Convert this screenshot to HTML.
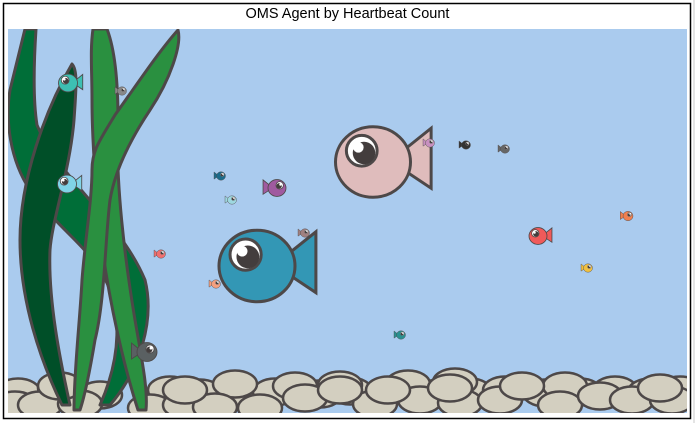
<!DOCTYPE html>
<html><head><meta charset="utf-8"><style>
html,body{margin:0;padding:0;background:#fff;}
body{width:695px;height:423px;overflow:hidden;position:relative;}
.t{position:absolute;left:0;top:6px;width:695px;text-align:center;font:14.5px "Liberation Sans",sans-serif;color:#000;}
</style></head><body>
<svg width="695" height="423" style="position:absolute;left:0;top:0">
<defs>
<clipPath id="c"><rect x="8" y="29" width="679" height="384"/></clipPath>
<g id="f">
<polygon points="8,-3 15.5,-9 15.5,7 8,2" stroke-linejoin="miter"/>
<ellipse cx="0" cy="0" rx="10" ry="9.4"/>
<circle cx="-3" cy="-3" r="4.1" fill="#fff"/>
<circle cx="-2.4" cy="-2.4" r="3.0" fill="#433d3d" stroke="none"/>
<circle cx="-3.9" cy="-3.9" r="1.4" fill="#fff" stroke="none"/>
</g>
<ellipse id="p" cx="0" cy="0" rx="22" ry="13.5"/>
</defs>
<rect x="693" y="0" width="2" height="423" fill="#e4e4e4"/>
<rect x="3.5" y="3.5" width="687" height="415" fill="#fff" stroke="#000" stroke-width="1.5"/>
<rect x="8" y="29" width="679" height="384" fill="#aacbee"/>
<g clip-path="url(#c)" stroke="#4d4848" stroke-width="3" stroke-linejoin="round">
<g fill="#d3cfc0" stroke-width="2.5">
<use href="#p" x="18" y="392"/><use href="#p" x="60" y="388"/><use href="#p" x="100" y="395"/><use href="#p" x="170" y="390"/><use href="#p" x="200" y="393"/><use href="#p" x="240" y="395"/><use href="#p" x="275" y="392"/><use href="#p" x="320" y="394"/><use href="#p" x="350" y="391"/><use href="#p" x="395" y="390"/><use href="#p" x="430" y="394"/><use href="#p" x="470" y="392"/><use href="#p" x="505" y="390"/><use href="#p" x="545" y="393"/><use href="#p" x="580" y="392"/><use href="#p" x="615" y="390"/><use href="#p" x="650" y="392"/><use href="#p" x="680" y="390"/>
<use href="#p" x="235" y="384"/><use href="#p" x="340" y="385"/><use href="#p" x="455" y="382"/><use href="#p" x="565" y="386"/><use href="#p" x="295" y="386"/><use href="#p" x="408" y="384"/>
<use href="#p" x="15" y="405"/><use href="#p" x="40" y="405"/><use href="#p" x="80" y="404"/><use href="#p" x="150" y="408"/><use href="#p" x="185" y="405"/><use href="#p" x="215" y="407"/><use href="#p" x="260" y="408"/><use href="#p" x="305" y="398"/><use href="#p" x="375" y="404"/><use href="#p" x="420" y="400"/><use href="#p" x="460" y="403"/><use href="#p" x="500" y="400"/><use href="#p" x="560" y="405"/><use href="#p" x="600" y="396"/><use href="#p" x="632" y="400"/><use href="#p" x="672" y="400"/>
<use href="#p" x="388" y="390"/><use href="#p" x="450" y="388"/><use href="#p" x="522" y="386"/><use href="#p" x="660" y="388"/><use href="#p" x="340" y="390"/><use href="#p" x="185" y="390"/><use href="#p" x="60" y="386"/>
</g>
<path fill="#006e38" d="M25,29 L36,29 C34,60 33,100 37,125 C60,180 120,220 145,280 C155,320 140,370 110,405 L100,405 C120,360 125,310 100,270 C80,240 60,230 30,190 C10,160 5,120 10,90 Z"/>
<path fill="#004f28" d="M72,64 C78,70 76,90 74,120 C70,170 52,220 50,250 C48,300 60,360 70,405 L62,405 C40,360 20,300 20,240 C20,180 45,110 72,64 Z"/>
<path fill="#2a9040" d="M93,29 L107,29 C115,50 118,80 118,120 C115,180 125,260 135,320 C142,360 148,390 146,410 L138,410 C125,370 108,300 100,230 C95,180 92,140 92,100 C92,70 90,50 93,29 Z"/>
<path fill="#2a9040" d="M178,30 C182,45 170,80 150,110 C130,140 115,170 110,200 C105,240 105,300 95,340 C90,370 85,395 80,410 L74,410 C74,370 80,320 82,280 C85,240 92,200 92,170 C92,150 100,140 115,115 C140,80 160,50 178,30 Z"/>
</g>
<g stroke="#4d4848" stroke-width="0.8">
<use href="#f" transform="translate(373,162) scale(3.75)" fill="#dfbcbc"/>
<use href="#f" transform="translate(257,266) scale(3.8)" fill="#3397b5"/>
<g stroke-width="0.9">
<use href="#f" transform="translate(68,83) scale(0.95)" fill="#3dbfb2"/>
<use href="#f" transform="translate(67,184) scale(0.95)" fill="#80d4e8"/>
<use href="#f" transform="translate(538,236) scale(0.9)" fill="#f05a5a"/>
<use href="#f" transform="translate(277,188) scale(-0.9,0.9)" fill="#a05aa0"/>
<use href="#f" transform="translate(147,352) scale(-1,1)" fill="#5a6062"/>
<use href="#f" transform="translate(122,91) scale(-0.45,0.45)" fill="#888"/>
<use href="#f" transform="translate(221,176) scale(-0.45,0.45)" fill="#1c6b8a"/>
<use href="#f" transform="translate(232,200) scale(-0.45,0.45)" fill="#9ed8e0"/>
<use href="#f" transform="translate(305,233) scale(-0.45,0.45)" fill="#a08080"/>
<use href="#f" transform="translate(161,254) scale(-0.45,0.45)" fill="#f07070"/>
<use href="#f" transform="translate(216,284) scale(-0.45,0.45)" fill="#f4a080"/>
<use href="#f" transform="translate(430,143) scale(-0.45,0.45)" fill="#c890c0"/>
<use href="#f" transform="translate(466,145) scale(-0.45,0.45)" fill="#333"/>
<use href="#f" transform="translate(505,149) scale(-0.45,0.45)" fill="#666"/>
<use href="#f" transform="translate(628,216) scale(-0.5,0.5)" fill="#f08050"/>
<use href="#f" transform="translate(588,268) scale(-0.45,0.45)" fill="#f0c040"/>
<use href="#f" transform="translate(401,335) scale(-0.45,0.45)" fill="#2a9090"/>
</g>
</g>
</svg>
<div class="t">OMS Agent by Heartbeat Count</div>
</body></html>
